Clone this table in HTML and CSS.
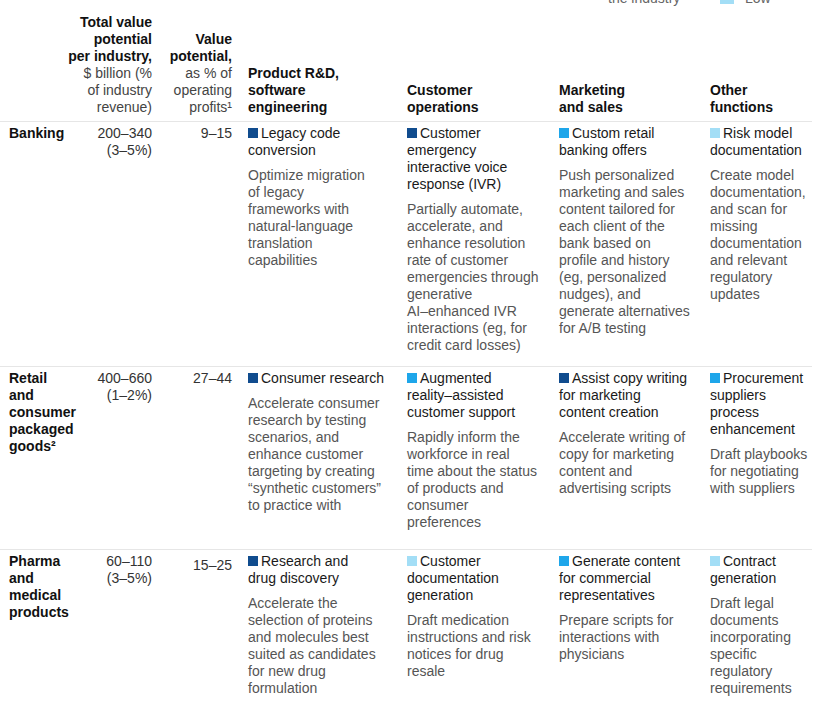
FILE: index.html
```html
<!DOCTYPE html>
<html lang="en">
<head>
<meta charset="utf-8">
<title>Generative AI value potential by industry</title>
<link rel="stylesheet" href="styles.css">
</head>
<body>
<div class="chart">
  <div class="legend">
    <span class="legend-label">the industry</span>
    <span class="legend-sw sw-light"></span>
    <span class="legend-label">Low</span>
  </div>

  <div class="row head">
    <div class="c c1"></div>
    <div class="c c2 num"><b>Total value<br>potential<br>per industry,</b><br><span class="hreg">$ billion (%<br>of industry<br>revenue)</span></div>
    <div class="c c3 num"><b>Value<br>potential,</b><br><span class="hreg">as % of<br>operating<br>profits¹</span></div>
    <div class="c c4"><b>Product R&amp;D,<br>software<br>engineering</b></div>
    <div class="c c5"><b>Customer<br>operations</b></div>
    <div class="c c6"><b>Marketing<br>and sales</b></div>
    <div class="c c7"><b>Other<br>functions</b></div>
  </div>

  <div class="row body-row">
    <div class="c c1 ind">Banking</div>
    <div class="c c2 num">200–340<br>(3–5%)</div>
    <div class="c c3 num">9–15</div>
    <div class="c c4"><div class="t"><span class="sw sw-dark"></span>Legacy code<br>conversion</div><div class="d">Optimize migration<br>of legacy<br>frameworks with<br>natural-language<br>translation<br>capabilities</div></div>
    <div class="c c5"><div class="t"><span class="sw sw-dark"></span>Customer<br>emergency<br>interactive voice<br>response (IVR)</div><div class="d">Partially automate,<br>accelerate, and<br>enhance resolution<br>rate of customer<br>emergencies through<br>generative<br>AI–enhanced IVR<br>interactions (eg, for<br>credit card losses)</div></div>
    <div class="c c6"><div class="t"><span class="sw sw-mid"></span>Custom retail<br>banking offers</div><div class="d">Push personalized<br>marketing and sales<br>content tailored for<br>each client of the<br>bank based on<br>profile and history<br>(eg, personalized<br>nudges), and<br>generate alternatives<br>for A/B testing</div></div>
    <div class="c c7"><div class="t"><span class="sw sw-light"></span>Risk model<br>documentation</div><div class="d">Create model<br>documentation,<br>and scan for<br>missing<br>documentation<br>and relevant<br>regulatory<br>updates</div></div>
  </div>

  <div class="row body-row row-tall">
    <div class="c c1 ind">Retail<br>and<br>consumer<br>packaged<br>goods²</div>
    <div class="c c2 num">400–660<br>(1–2%)</div>
    <div class="c c3 num">27–44</div>
    <div class="c c4"><div class="t"><span class="sw sw-dark"></span>Consumer research</div><div class="d">Accelerate consumer<br>research by testing<br>scenarios, and<br>enhance customer<br>targeting by creating<br>“synthetic customers”<br>to practice with</div></div>
    <div class="c c5"><div class="t"><span class="sw sw-mid"></span>Augmented<br>reality–assisted<br>customer support</div><div class="d">Rapidly inform the<br>workforce in real<br>time about the status<br>of products and<br>consumer<br>preferences</div></div>
    <div class="c c6"><div class="t"><span class="sw sw-dark"></span>Assist copy writing<br>for marketing<br>content creation</div><div class="d">Accelerate writing of<br>copy for marketing<br>content and<br>advertising scripts</div></div>
    <div class="c c7"><div class="t"><span class="sw sw-mid"></span>Procurement<br>suppliers<br>process<br>enhancement</div><div class="d">Draft playbooks<br>for negotiating<br>with suppliers</div></div>
  </div>

  <div class="row body-row">
    <div class="c c1 ind">Pharma<br>and<br>medical<br>products</div>
    <div class="c c2 num">60–110<br>(3–5%)</div>
    <div class="c c3 num nudge">15–25</div>
    <div class="c c4"><div class="t"><span class="sw sw-dark"></span>Research and<br>drug discovery</div><div class="d">Accelerate the<br>selection of proteins<br>and molecules best<br>suited as candidates<br>for new drug<br>formulation</div></div>
    <div class="c c5"><div class="t"><span class="sw sw-light"></span>Customer<br>documentation<br>generation</div><div class="d">Draft medication<br>instructions and risk<br>notices for drug<br>resale</div></div>
    <div class="c c6"><div class="t"><span class="sw sw-mid"></span>Generate content<br>for commercial<br>representatives</div><div class="d">Prepare scripts for<br>interactions with<br>physicians</div></div>
    <div class="c c7"><div class="t"><span class="sw sw-light"></span>Contract<br>generation</div><div class="d">Draft legal<br>documents<br>incorporating<br>specific<br>regulatory<br>requirements</div></div>
  </div>
</div>
</body>
</html>
```

FILE: styles.css
```css
html, body {
  margin: 0;
  padding: 0;
  background: #ffffff;
}

body {
  font-family: "Liberation Sans", Arial, sans-serif;
  font-size: 14px;
  line-height: 17px;
  color: #1a1a1a;
  overflow: hidden;
}

.chart {
  width: 812px;
}

.legend {
  display: flex;
  height: 17px;
  margin: -10px 0 0 608px;
  color: #666666;
  white-space: nowrap;
}

.legend-label:first-child {
  width: 112px;
}

.legend-sw {
  align-self: flex-end;
  width: 14px;
  height: 14px;
  margin: 0 11px 3px 0;
}

.row {
  display: grid;
  grid-template-columns: 82px 78px 88px 159px 152px 151px 102px;
}

.c {
  white-space: nowrap;
}

.head {
  margin-top: 7px;
  padding-bottom: 5px;
  align-items: end;
}

.head b {
  font-weight: bold;
  color: #111111;
}

.hreg {
  color: #444444;
}

.head .c2 {
  margin-left: -16px;
}

.body-row {
  border-top: 1px solid #e6e6e6;
  padding: 3px 0 12px;
}

.row-tall {
  padding-bottom: 18px;
}

.c1 {
  padding-left: 9px;
}

.ind {
  font-weight: bold;
  color: #111111;
}

.num {
  text-align: right;
}

.body-row .num {
  color: #333333;
}

.c2 {
  padding-right: 8px;
}

.c3 {
  padding-right: 16px;
}

.nudge {
  padding-top: 4px;
}

.t {
  color: #1a1a1a;
}

.d {
  margin-top: 8px;
  color: #555555;
}

.sw {
  display: inline-block;
  width: 10px;
  height: 10px;
  margin-right: 3px;
}

.sw-dark {
  background: #104c8e;
}

.sw-mid {
  background: #1ea6ea;
}

.sw-light {
  background: #a3def6;
}
```
